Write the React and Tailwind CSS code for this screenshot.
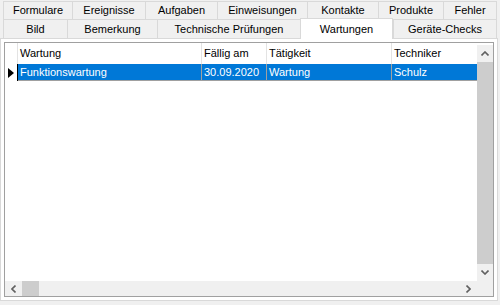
import React from "react";

const row1 = [
  ["Formulare", 69],
  ["Ereignisse", 73],
  ["Aufgaben", 72],
  ["Einweisungen", 90],
  ["Kontakte", 71],
  ["Produkte", 65],
  ["Fehler", 54],
];
const row2 = [
  ["Bild", 64, false],
  ["Bemerkung", 90, false],
  ["Technische Prüfungen", 143, false],
  ["Wartungen", 93, true],
  ["Geräte-Checks", 104, false],
];

const font = { fontFamily: '"Liberation Sans", Arial, sans-serif' };

function Tab({ label, w, last }) {
  return (
    <div
      className={`h-full flex items-center justify-center border-t border-l border-[#d9d9d9] bg-[#f0f0f0] text-[11px] text-black ${last ? "border-r" : ""}`}
      style={{ width: w }}
    >
      {label}
    </div>
  );
}

export default function App() {
  return (
    <div className="w-[500px] h-[305px] bg-[#f0f0f0] overflow-hidden flex flex-col" style={font}>
      <div className="h-[1px]" />
      <div className="flex h-[18px] pl-[3px]">
        {row1.map(([l, w], i) => (
          <Tab key={l} label={l} w={w} last={i === row1.length - 1} />
        ))}
      </div>
      <div className="flex h-[19px] pl-[3px] relative z-10">
        {row2.map(([l, w, sel], i) =>
          sel ? (
            <div
              key={l}
              className="h-[21px] -mt-[1px] flex items-start pt-[2px] justify-center border-t border-l border-r border-[#d9d9d9] bg-white text-[11px] text-black"
              style={{ width: w }}
            >
              {l}
            </div>
          ) : (
            <Tab key={l} label={l} w={w} last={i === row2.length - 1} />
          )
        )}
      </div>
      <div className="w-[498px] h-[263px] bg-white border border-[#d9d9d9] p-[3px] flex">
        <div className="flex-1 border border-[#a0a0a0] bg-white flex flex-col">
          <div className="flex flex-1 min-h-0">
            <div className="flex-1 flex flex-col">
              {/* header */}
              <div className="flex h-[21px] text-[11px] text-black">
                <div className="w-[13px] border-r border-[#e3e3e3]" />
                <div className="w-[184px] border-r border-[#e3e3e3] flex items-center pl-[2px]">Wartung</div>
                <div className="w-[65px] border-r border-[#e3e3e3] flex items-center pl-[2px]">Fällig am</div>
                <div className="w-[125px] border-r border-[#e3e3e3] flex items-center pl-[2px]">Tätigkeit</div>
                <div className="w-[85px] flex items-center pl-[2px]">Techniker</div>
              </div>
              {/* selected row */}
              <div className="flex h-[17px] text-[11px]">
                <div className="w-[13px] border-r border-black bg-white flex items-center justify-center">
                  <svg width="6" height="10" viewBox="0 0 6 10">
                    <path d="M0 0 L6 5 L0 10 Z" fill="#000" />
                  </svg>
                </div>
                <div className="flex flex-1 bg-[#0078d7] text-white border-b border-[#a0a0a0]">
                  <div className="w-[184px] border-r border-[#a0a0a0] flex items-center pl-[2px]">Funktionswartung</div>
                  <div className="w-[65px] border-r border-[#a0a0a0] flex items-center pl-[2px]">30.09.2020</div>
                  <div className="w-[125px] border-r border-[#a0a0a0] flex items-center pl-[2px]">Wartung</div>
                  <div className="w-[85px] flex items-center pl-[2px]">Schulz</div>
                </div>
              </div>
              <div className="flex-1" />
            </div>
            {/* vertical scrollbar */}
            <div className="w-[16px] mt-[2px] bg-[#f0f0f0] flex flex-col items-center">
              <div className="h-[17px] flex items-center justify-center">
                <svg width="8" height="5" viewBox="0 0 8 5">
                  <path d="M0.5 4.5 L4 1 L7.5 4.5" stroke="#606060" strokeWidth="1.6" fill="none" />
                </svg>
              </div>
              <div className="w-[16px] flex-1 bg-[#cdcdcd]" />
              <div className="h-[17px] flex items-center justify-center">
                <svg width="8" height="5" viewBox="0 0 8 5">
                  <path d="M0.5 0.5 L4 4 L7.5 0.5" stroke="#606060" strokeWidth="1.6" fill="none" />
                </svg>
              </div>
            </div>
          </div>
          {/* horizontal scrollbar */}
          <div className="h-[15px] flex bg-[#f0f0f0]">
            <div className="w-[17px] flex items-center justify-center">
              <svg width="5" height="8" viewBox="0 0 5 8">
                <path d="M4.5 0.5 L1 4 L4.5 7.5" stroke="#606060" strokeWidth="1.6" fill="none" />
              </svg>
            </div>
            <div className="w-[17px] bg-[#cdcdcd]" />
            <div className="flex-1" />
            <div className="w-[17px] flex items-center justify-center">
              <svg width="5" height="8" viewBox="0 0 5 8">
                <path d="M0.5 0.5 L4 4 L0.5 7.5" stroke="#606060" strokeWidth="1.6" fill="none" />
              </svg>
            </div>
            <div className="w-[16px]" />
          </div>
        </div>
      </div>
    </div>
  );
}
